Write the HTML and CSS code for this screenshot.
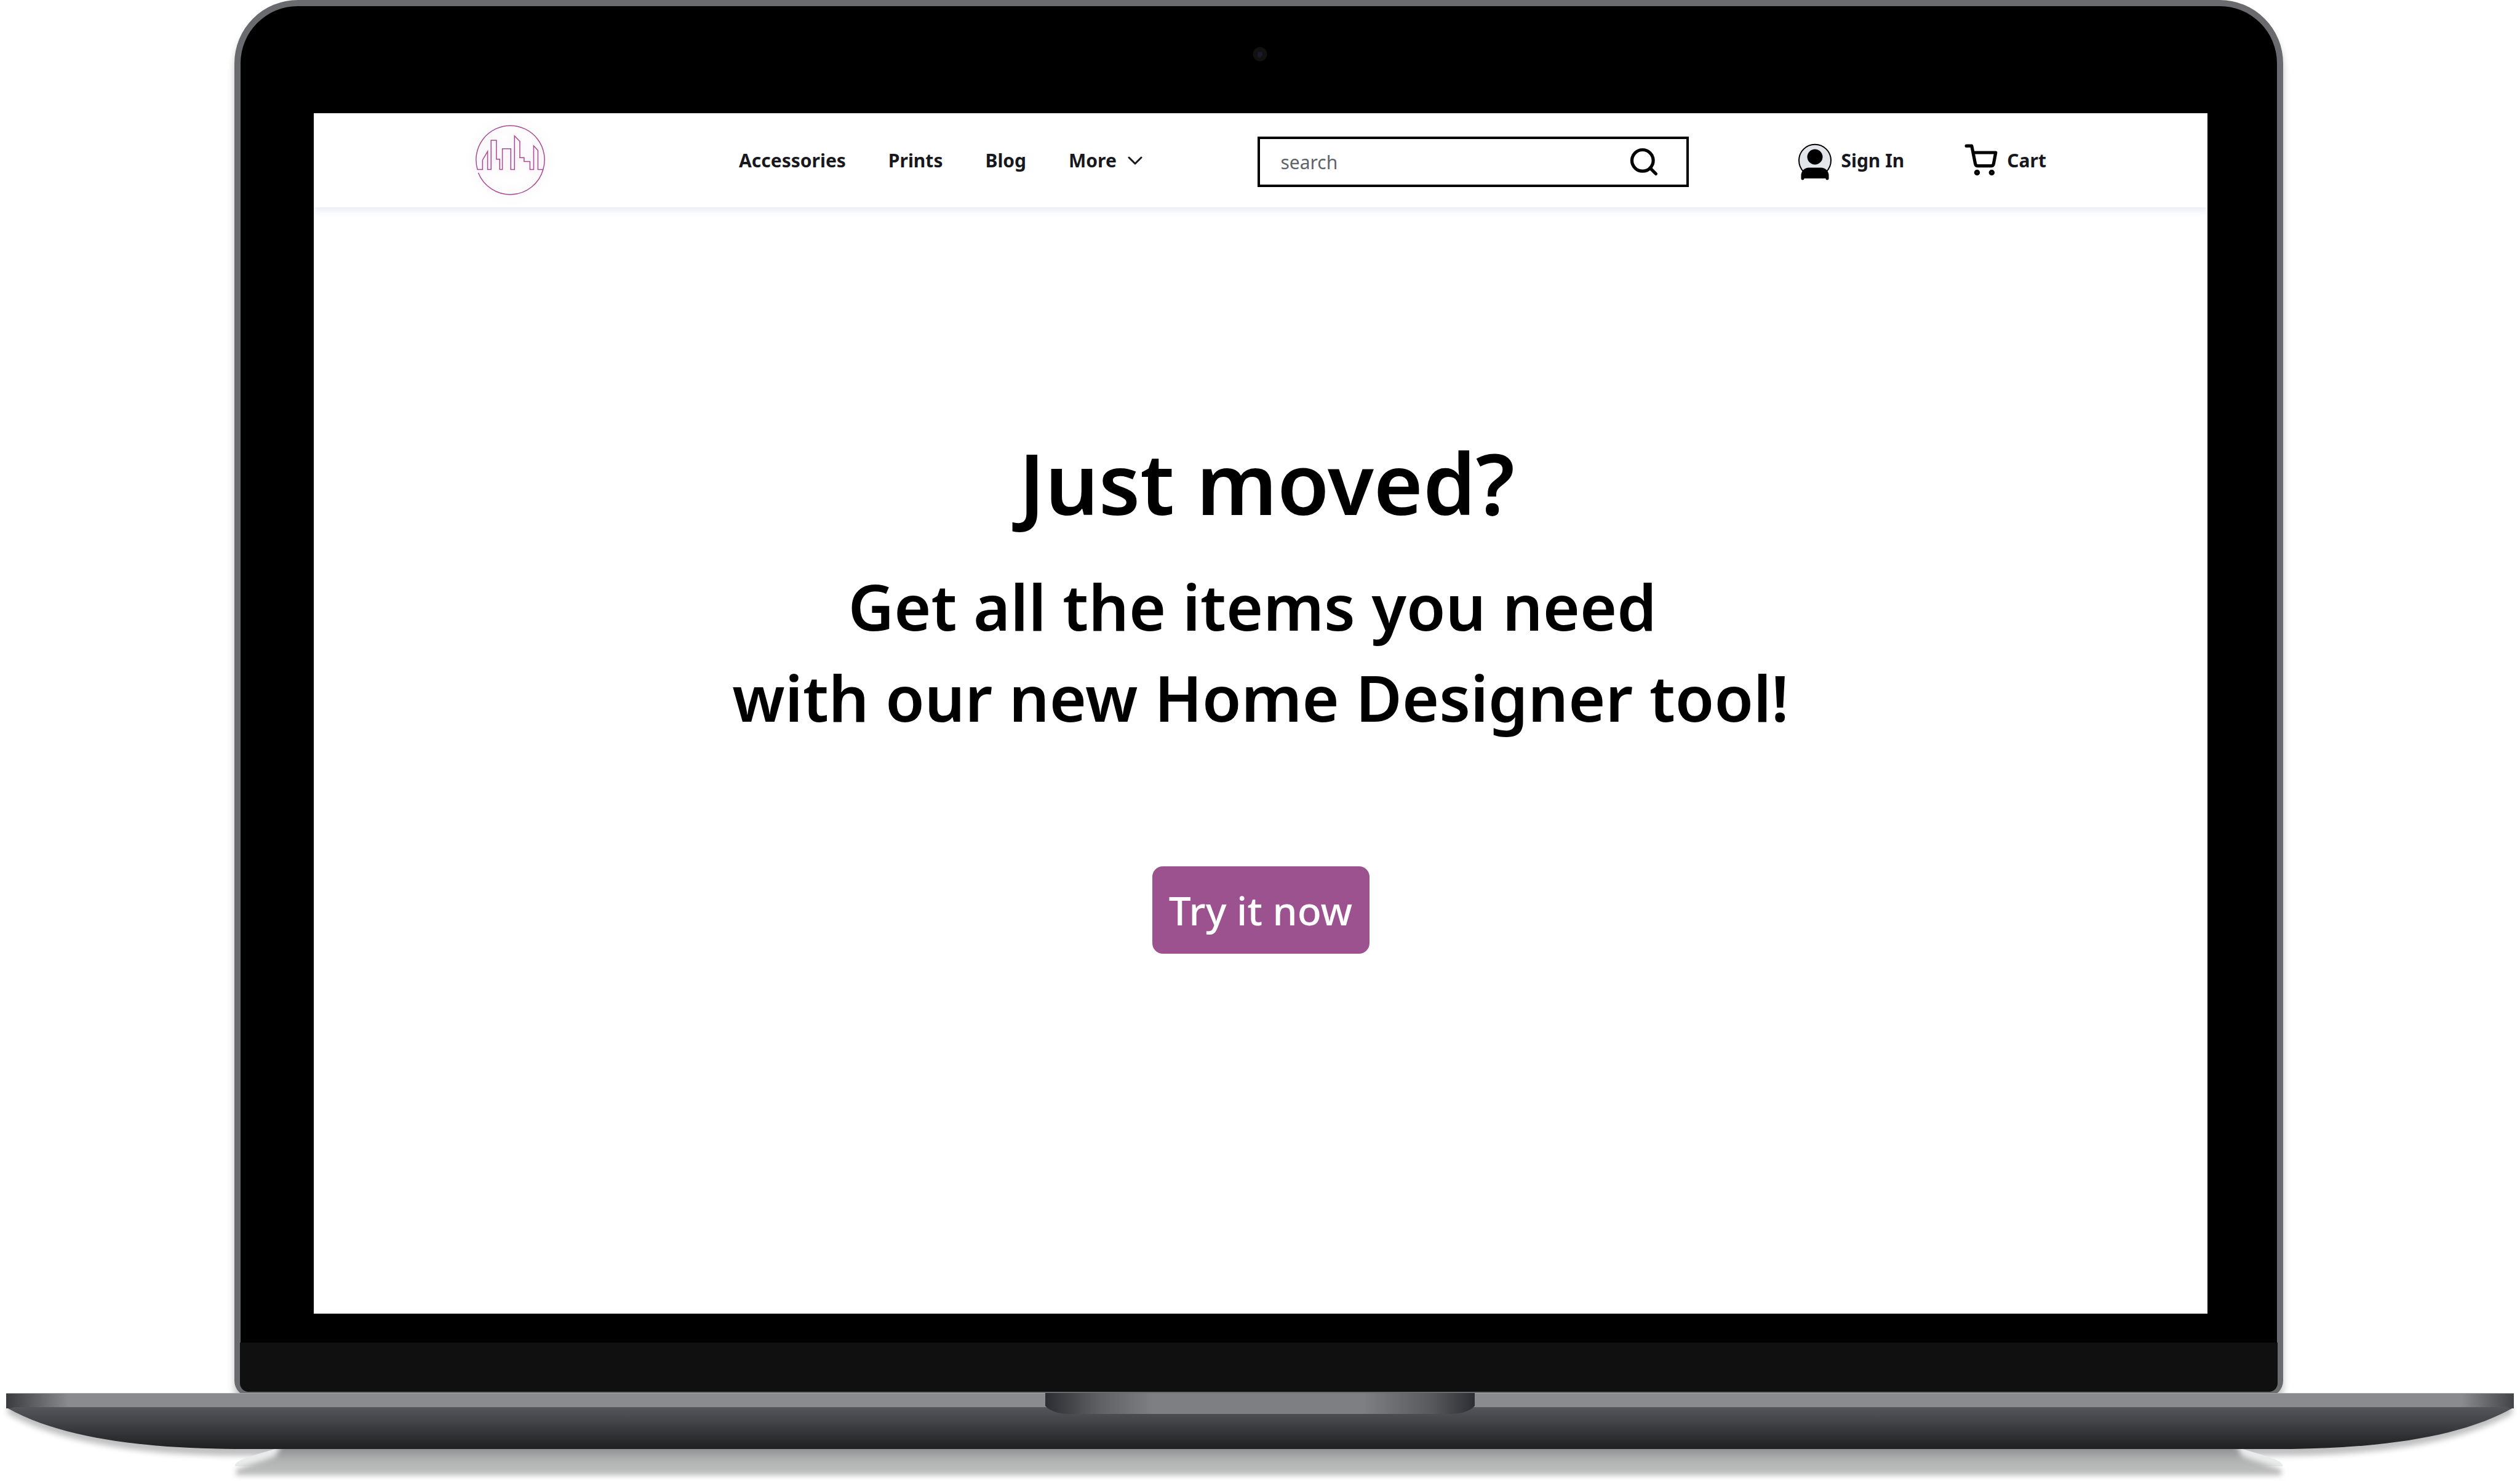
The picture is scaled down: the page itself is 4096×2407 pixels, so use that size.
FILE: index.html
```html
<!DOCTYPE html>
<html lang="en">
<head>
<meta charset="utf-8">
<title>Home Designer</title>
<link rel="stylesheet" href="styles.css">
</head>
<body>
<div class="laptop">
  <div class="lid">
    <div class="bezel">
      <svg class="camera" viewBox="0 0 24 24" aria-hidden="true"><circle cx="12" cy="12" r="11.5" fill="#111"/><circle cx="11" cy="15" r="3" fill="#141821"/><circle cx="12" cy="12" r="4" fill="#171c27"/></svg>
    </div>
    <div class="screen">
      <header class="navbar">
        <a class="logo" href="#" aria-label="Home">
          <svg viewBox="60 60 610 610" fill="none" stroke="#a64d94" stroke-width="7">
            <path d="M122 456A257 257 0 0 0 609 432H570V289L538 254V432H510V372H466V343H434V221L394 180V432H366V276H303V432H283V355H258V212H218V432H192V296L154 361V432H116A257 257 0 1 1 609 432"/>
          </svg>
        </a>
        <nav class="links">
          <a href="#">Accessories</a>
          <a href="#">Prints</a>
          <a href="#">Blog</a>
          <a class="more" href="#">More
            <svg class="chevron" viewBox="0 0 24 16" fill="none" stroke="currentColor" stroke-width="3" stroke-linecap="round" stroke-linejoin="round"><path d="M2 3l10 10L22 3"/></svg>
          </a>
        </nav>
        <form class="search">
          <input type="text" placeholder="search" aria-label="search">
          <button type="button" aria-label="Submit search">
            <svg class="icon" viewBox="0 0 24 24" fill="none" stroke="#000" stroke-width="2.4" stroke-linecap="round"><circle cx="11" cy="11" r="8"/><path d="M21 21l-4.35-4.35"/></svg>
          </button>
        </form>
        <a class="account" href="#">
          <svg class="user" viewBox="0 -2.6 24 24" stroke="#000" stroke-width="2" stroke-linecap="round" stroke-linejoin="round">
            <circle cx="12" cy="9.3" r="10.4" fill="#e2e5ea" stroke-width=".8"/>
            <path d="M20 21v-2a4 4 0 0 0-4-4H8a4 4 0 0 0-4 4v2"/>
            <circle cx="12" cy="7" r="4"/>
          </svg>
          Sign In
        </a>
        <a class="cart" href="#">
          <svg class="icon" viewBox="0 0 24 24" fill="none" stroke="#000" stroke-width="2.4" stroke-linecap="round" stroke-linejoin="round">
            <circle cx="9" cy="21" r="1.2" stroke-width="2"/><circle cx="20" cy="21" r="1.2" stroke-width="2"/>
            <path d="M1 1h4l2.68 13.39a2 2 0 0 0 2 1.61h9.72a2 2 0 0 0 2-1.61L23 6H6"/>
          </svg>
          Cart
        </a>
      </header>
      <main class="hero">
        <h1>Just moved?</h1>
        <p>Get all the items you need&nbsp;<br>with our new Home Designer tool!</p>
        <button class="cta" type="button">Try it now</button>
      </main>
    </div>
    <div class="chin"></div>
  </div>
  <svg class="base" viewBox="0 0 4096 143" aria-hidden="true">
    <defs>
      <linearGradient id="edge" gradientUnits="userSpaceOnUse" x1="10" y1="0" x2="4086" y2="0">
        <stop offset="0" stop-color="#3a3b3f"/><stop offset=".025" stop-color="#8a8b8f"/>
        <stop offset=".979" stop-color="#8a8b8f"/><stop offset="1" stop-color="#424347"/>
      </linearGradient>
      <linearGradient id="body" x1="0" y1="0" x2="0" y2="1">
        <stop offset="0" stop-color="#55565b"/><stop offset=".4" stop-color="#414246"/><stop offset=".65" stop-color="#323334"/><stop offset="1" stop-color="#202022"/>
      </linearGradient>
      <linearGradient id="notch" x1="0" y1="0" x2="1" y2="0">
        <stop offset="0" stop-color="#2c2d32"/><stop offset=".125" stop-color="#5f6064"/><stop offset=".25" stop-color="#7e7f83"/>
        <stop offset=".74" stop-color="#7e7f83"/><stop offset=".9" stop-color="#58595d"/><stop offset="1" stop-color="#2d2e33"/>
      </linearGradient>
      <linearGradient id="reflection" gradientUnits="userSpaceOnUse" x1="0" y1="91" x2="0" y2="134">
        <stop offset="0" stop-color="#8f9192"/><stop offset=".4" stop-color="#b0b2b1"/><stop offset="1" stop-color="#c0c0c0"/>
      </linearGradient>
      <filter id="soft" filterUnits="userSpaceOnUse" x="0" y="60" width="4096" height="100"><feGaussianBlur stdDeviation="4"/></filter>
      <filter id="drop" filterUnits="userSpaceOnUse" x="0" y="0" width="4096" height="143"><feGaussianBlur stdDeviation="5"/></filter>
      <clipPath id="foot"><path d="M447 91C420 99 382 109 382 117L376 122V143H3716V122L3710 117C3710 109 3672 99 3645 91Z"/></clipPath>
    </defs>
    <path d="M13 34C110 88 260 102 400 102H3696C3836 102 3986 88 4083 34V20H13Z" fill="#000" opacity=".25" filter="url(#drop)"/>
    <g clip-path="url(#foot)">
      <path d="M382 91H3710V119H382Z" fill="#eaeceb"/>
      <path d="M370 119H3722V143H370Z" fill="#fff"/>
      <path d="M460 80L447 103L384 124V134H3708V124L3645 103L3632 80Z" fill="url(#reflection)" filter="url(#soft)"/>
    </g>
    <path d="M10 22H4086L4083 25C3986 79 3836 91 3696 91H400C260 91 110 79 13 25Z" fill="url(#body)"/>
    <path d="M10 0H4086V25H4080L4072 23H24L16 25H10Z" fill="url(#edge)"/>
    <path d="M10 0H4086V1H10Z" fill="#a6a7aa"/>
    <path d="M1699 0H2397V21C2390 28 2378 34 2358 34H1738C1718 34 1706 28 1699 21Z" fill="url(#notch)"/>
  </svg>
</div>
</body>
</html>
```
FILE: styles.css
```css
* { box-sizing: border-box; }

body {
  margin: 0;
  background: #fff;
  color: #18181f;
  font-family: "Noto Sans", sans-serif;
}

a { color: inherit; text-decoration: none; }
svg { display: block; overflow: visible; }

/* Laptop */
.laptop {
  display: flex;
  flex-direction: column;
  min-height: 100vh;
  overflow: hidden;
}

.lid {
  flex: 1;
  display: flex;
  flex-direction: column;
  margin: 0 385px 0 381px;
  border: 10px solid #6a6b6f;
  border-bottom-width: 8px;
  border-radius: 103px 103px 26px 26px;
  background: #000;
  box-shadow: 0 12px 12px rgba(0, 0, 0, 0.25);
}

.bezel {
  display: flex;
  justify-content: center;
  padding: 66px 0 0 4px;
  height: 174px;
}

.camera { width: 24px; height: 24px; }

.screen {
  flex: 1;
  display: flex;
  flex-direction: column;
  margin: 0 113px 47px 119px;
  overflow: hidden;
  background: #fff;
}

.chin {
  height: 80px;
  margin: 0 -1px;
  border-radius: 0 0 14px 14px;
  background: #101010;
}

.base {
  position: relative;
  width: 100%;
  margin-top: -6px;
}

/* Navigation */
.navbar {
  display: flex;
  align-items: center;
  height: 153px;
  padding: 0 262px 0 254px;
  box-shadow: 0 6px 10px #ebedf5;
  font-size: 30px;
  font-weight: 700;
  white-space: nowrap;
}

.logo svg {
  width: 132px;
  height: 132px;
  filter: drop-shadow(0 0 8px rgba(166, 77, 148, 0.3));
}

.links {
  display: flex;
  gap: 69px;
  margin-left: 305px;
}

.more {
  display: flex;
  align-items: center;
  gap: 18px;
}

.chevron { width: 24px; height: 16px; }
.icon { width: 52px; height: 52px; }
.user { width: 60px; height: 60px; }

.search {
  display: flex;
  align-items: center;
  width: 701px;
  height: 82px;
  margin: 5px 175px 0 auto;
  padding: 0 43px 0 33px;
  border: 4px solid #000;
}

.search input {
  flex: 1;
  min-width: 0;
  padding: 0;
  border: 0;
  outline: 0;
  background: none;
  font: 400 30px "Noto Sans", sans-serif;
}

.search input::placeholder { color: #5f6368; opacity: 1; }

.search button {
  padding: 0;
  border: 0;
  background: none;
}

.account, .cart {
  display: flex;
  align-items: center;
  gap: 12px;
}

.cart { gap: 16px; margin-left: 99px; }

/* Hero */
.hero {
  display: flex;
  flex-direction: column;
  align-items: center;
  padding-top: 354px;
  color: #000;
  text-align: center;
}

.hero h1 {
  margin: 0;
  padding-left: 20px;
  font-size: 137px;
  font-weight: 600;
  line-height: 187px;
}

.hero p {
  margin: 33px 0 0;
  font-size: 103px;
  font-weight: 600;
  line-height: 148px;
}

.cta {
  width: 353px;
  height: 142px;
  margin-top: 201px;
  padding: 0;
  border: 0;
  border-radius: 17px;
  background: #9c528e;
  color: #fff;
  font: 500 64px "Noto Sans", sans-serif;
}
```
